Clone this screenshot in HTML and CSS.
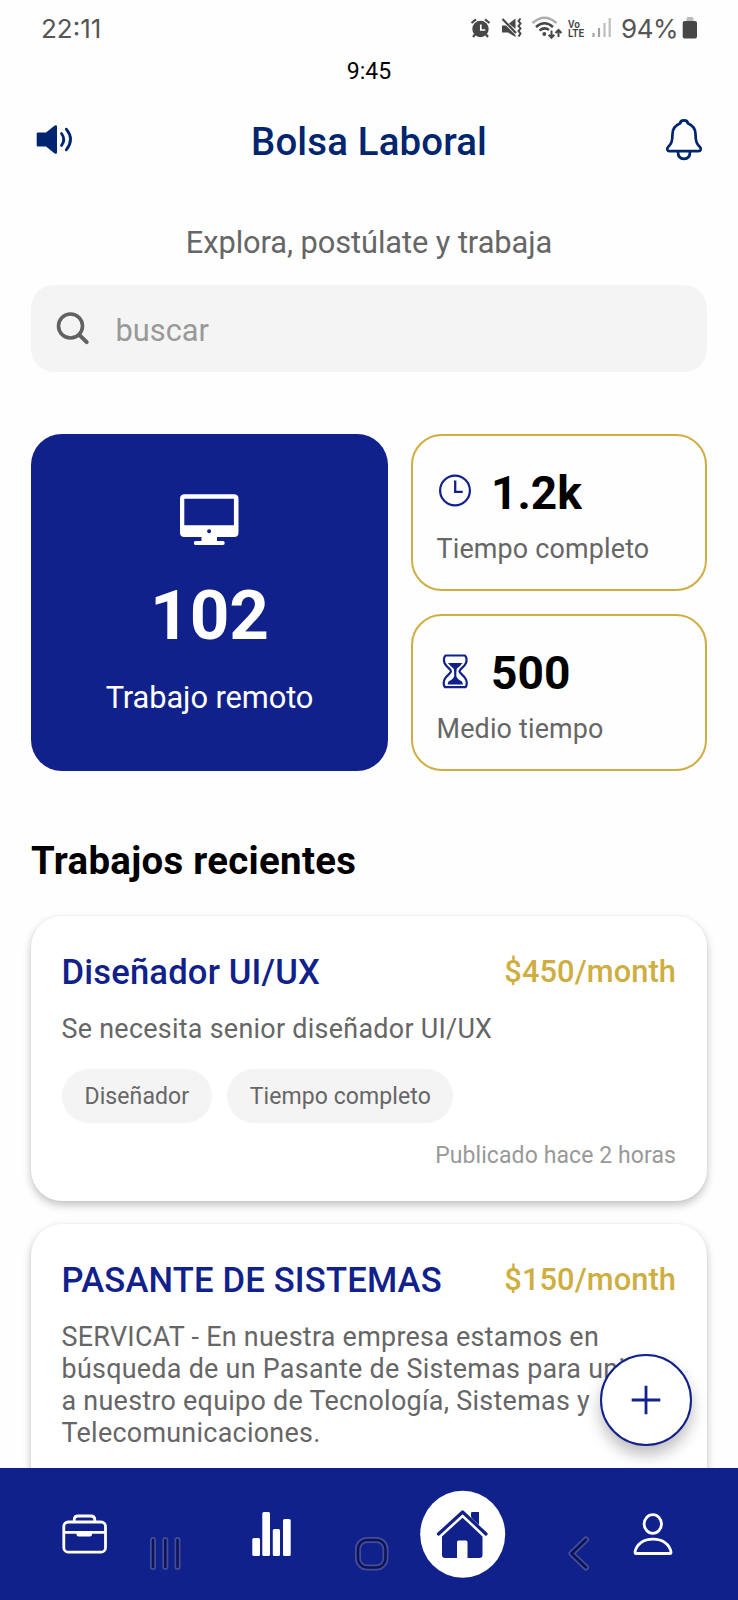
FILE: index.html
```html
<!DOCTYPE html>
<html lang="es">
<head>
<meta charset="utf-8">
<title>Bolsa Laboral</title>
<link rel="stylesheet" href="styles.css">
</head>
<body>
<div class="screen">
  <div class="status">
    <span class="status-time">22:11</span>
    <div class="status-right">
      <svg class="status-icons" viewBox="468 14 94 30" width="94" height="30">
        <g fill="#474747" stroke="#474747">
          <circle cx="480.500" cy="30" r="8.200" stroke="none"/>
          <path d="M471.500 24 476 20.300M489.500 24 485 20.300M475 35.500 473 38M486 35.500 488 38" fill="none" stroke-width="2.200"/>
          <path d="M480.800 25.500v5.500h4.500" fill="none" stroke="#fff" stroke-width="1.700"/>
          <path d="M502 26.500h4l9.500 9.500v2L508 33.500h-6z" stroke="none"/>
          <path d="M509 24.500 515.500 19.500v10.500z" stroke="none"/>
          <path d="M502.500 20 516 34" fill="none" stroke-width="2.200"/>
          <path d="M520.500 19.500l-2 2.500 2 2.500-2 2.500 2 2.500-2 2.500 2 2.500-2 3" fill="none" stroke-width="2"/>
          <path d="M532.500 24Q544.500 13.500 556.500 24" fill="none" stroke="#adadad" stroke-width="2.500"/>
          <path d="M536 28Q544.500 20.500 553 28M539.500 31.500Q544.500 27.500 549 31" fill="none" stroke-width="2.500"/>
          <circle cx="544.300" cy="35" r="1.900" stroke="none"/>
          <path d="M551.500 31.500v7M548.700 35.800l2.800 3 2.800-3M558.500 38v-7M555.500 34l3-3 3 3" fill="none" stroke-width="2"/>
        </g>
      </svg>
      <span class="volte"><span>Vo</span><span>LTE</span></span>
      <svg class="signal" viewBox="591 14 22 30" width="22" height="30">
        <path d="M593.500 34v4M599 29v9" stroke="#a5a5a5" stroke-width="2.200"/>
        <path d="M604.500 24v14M609.700 19v19" stroke="#bdbdbd" stroke-width="2.200"/>
      </svg>
      <span class="battery-level">94%</span>
      <svg viewBox="682 14 16 30" width="16" height="30">
        <path d="M686.500 23v-3.500q0-1.500 1.500-1.500h4q1.500 0 1.500 1.500V23z" fill="#bbb"/>
        <rect x="682.700" y="22" width="14.300" height="17.500" rx="2" fill="#474747"/>
      </svg>
    </div>
  </div>

  <main class="content">
    <div class="clock">9:45</div>
    <header class="header">
      <svg class="header-icon" viewBox="34 120 42 40" width="42" height="40">
        <path d="M38 132.500h8l8.700-7q2.300-1 2.300 1v26q0 2-2.300 1l-8.700-7h-8q-1.300 0-1.300-1.300v-11.400q0-1.300 1.300-1.300z" fill="#00256f"/>
        <path d="M61.500 133.500q4.500 6 0 12M66.300 129.200q8.500 10.300 0 20.600" fill="none" stroke="#00256f" stroke-width="2.800" stroke-linecap="round"/>
      </svg>
      <h1 class="title">Bolsa Laboral</h1>
      <svg class="header-icon" viewBox="664 117 40 46" width="40" height="46">
        <path d="M680.300 123.300C680.300 119.500 687.700 119.500 687.700 123.300C693 125.500 695.500 129.500 695.500 134C695.500 143 697.500 144.500 700 147.200C701.500 149 700.700 151.200 698.500 151.200H669.500C667.300 151.200 666.500 149 668 147.200C670.500 144.500 672.500 143 672.500 134C672.500 129.500 675 125.500 680.300 123.300Z" fill="none" stroke="#00256f" stroke-width="2.700" stroke-linejoin="round"/>
        <path d="M678 152q0 6.800 6 6.800t6-6.800" fill="none" stroke="#00256f" stroke-width="2.700"/>
      </svg>
    </header>
    <p class="tagline">Explora, postúlate y trabaja</p>
    <div class="search">
      <svg class="search-icon" viewBox="54 310 36 36" width="36" height="36">
        <circle cx="70.500" cy="326" r="12" fill="none" stroke="#616161" stroke-width="3.600"/>
        <path d="M79.300 334.800 86.700 342.200" stroke="#616161" stroke-width="4" stroke-linecap="round"/>
      </svg>
      <span class="search-text">buscar</span>
    </div>

    <section class="stats">
      <div class="stat-main">
        <svg viewBox="179 493 61 53" width="61" height="53">
          <path fill="#fff" fill-rule="evenodd" d="M184.500 494.300h49.500q4.500 0 4.500 4.500v33.700q0 4.500-4.500 4.500H217v4h6q1.700 0 1.700 2t-1.700 2h-27.500q-1.700 0-1.700-2t1.700-2h6v-4h-17q-4.500 0-4.500-4.500v-33.700q0-4.500 4.500-4.500zM184.300 498.800v26.400h49.600v-26.400zM209.100 529.200a2 2 0 1 0 .010 0z"/>
        </svg>
        <strong class="stat-main-value">102</strong>
        <span class="stat-main-label">Trabajo remoto</span>
      </div>
      <div class="stat">
        <div class="stat-row">
          <svg viewBox="439 473 34 36" width="34" height="36">
            <circle cx="456" cy="490.500" r="14.900" fill="none" stroke="#11218b" stroke-width="2.200"/>
            <path d="M456.200 480.500v11.300h7.500" fill="none" stroke="#11218b" stroke-width="2.300"/>
          </svg>
          <strong class="stat-value">1.2k</strong>
        </div>
        <span class="stat-label">Tiempo completo</span>
      </div>
      <div class="stat">
        <div class="stat-row">
          <svg viewBox="439 652 34 36" width="34" height="36">
            <path d="M446.500 654.500H466Q468.500 657 467 662C465 666.500 460.500 668 460.500 670.300C460.500 672.500 465 674 467 678.500Q468.800 683.500 466.500 686.200H446Q443.700 683.500 445.500 678.500C447.500 674 452 672.500 452 670.300C452 668 447.500 666.500 445.500 662Q444 657 446.500 654.500Z" fill="none" stroke="#11218b" stroke-width="2.200" stroke-linejoin="round"/>
            <path d="M449 662h14.500Q461 665.500 458 667.500 457.300 668 457.300 675 458 678 463 680.500L464 683.500H448.500L449.500 680.500Q454.500 678 455.200 675 455.200 668 454.500 667.500 451.500 665.500 449 662Z" fill="#11218b"/>
          </svg>
          <strong class="stat-value">500</strong>
        </div>
        <span class="stat-label">Medio tiempo</span>
      </div>
    </section>

    <h2 class="section-title">Trabajos recientes</h2>
    <article class="job">
      <div class="job-head"><h3 class="job-title">Diseñador UI/UX</h3><span class="job-pay">$450/month</span></div>
      <p class="job-text">Se necesita senior diseñador UI/UX</p>
      <div class="tags"><span class="tag">Diseñador</span><span class="tag">Tiempo completo</span></div>
      <div class="job-date">Publicado hace 2 horas</div>
    </article>
    <article class="job">
      <div class="job-head"><h3 class="job-title">PASANTE DE SISTEMAS</h3><span class="job-pay">$150/month</span></div>
      <p class="job-text">SERVICAT - En nuestra empresa estamos en<br>búsqueda de un Pasante de Sistemas para unir<br>a nuestro equipo de Tecnología, Sistemas y<br>Telecomunicaciones.</p>
    </article>
  </main>

  <button class="fab" aria-label="Agregar">
    <svg viewBox="0 0 30 30" width="30" height="30"><path d="M15 .700v28.600M.700 15h28.600" stroke="#11218b" stroke-width="2.800"/></svg>
  </button>

  <nav class="tabs">
    <svg viewBox="62.500 1512 46 44" width="46" height="44">
      <g fill="none" stroke="#fff" stroke-width="2.800">
        <rect x="64.300" y="1522" width="41.700" height="30.200" rx="4.500"/>
        <path d="M74.700 1521.500v-1.500q0-4 4-4h12.600q4 0 4 4v1.500M64.300 1532.300h41.700"/>
      </g>
      <path d="M77 1532.500h15.500v2q0 2-2 2h-11.500q-2 0-2-2z" fill="#fff"/>
    </svg>
    <svg class="tab-chart" viewBox="252 1511 40 46" width="40" height="46">
      <g fill="#fff"><rect x="252.300" y="1538" width="7.700" height="18" rx="1.500"/><rect x="262.300" y="1512" width="7.700" height="44" rx="1.500"/><rect x="272.800" y="1529" width="7.200" height="27" rx="1.500"/><rect x="283" y="1519" width="7.700" height="37" rx="1.500"/></g>
    </svg>
    <svg viewBox="420 1490 86 88" width="86" height="88">
      <ellipse cx="462.700" cy="1534.300" rx="42.500" ry="43.500" fill="#fff"/>
      <path d="M471 1517v-3.500q0-1.500 1.500-1.500h5q1.500 0 1.500 1.500V1526z" fill="#11218b"/>
      <path d="M438.500 1534.500 462.600 1512.200 486 1534.500" fill="none" stroke="#fff" stroke-width="6"/>
      <path d="M471.500 1518v-5h7v12" fill="#11218b"/>
      <path d="M442 1536.500 462.500 1517.500 482.500 1536.500V1555q0 3-3 3H467.500V1542q0-1.500-1.500-1.500h-7.500q-1.500 0-1.500 1.500V1558h-12q-3 0-3-3z" fill="#11218b"/>
      <path d="M439 1534.500 462.600 1514 486 1534.500" fill="none" stroke="#fff" stroke-width="5.600"/>
      <path d="M438.500 1534 462.600 1512 486 1534" fill="none" stroke="#11218b" stroke-width="3.200" stroke-linecap="round" stroke-linejoin="round"/>
      <path d="M471.500 1517v-5h7.500v13z" fill="#11218b"/>
    </svg>
    <svg viewBox="634.500 1511 42 44" width="42" height="44">
      <g fill="none" stroke="#fff" stroke-width="2.800" stroke-linejoin="round"><ellipse cx="653.300" cy="1523" rx="8.700" ry="9.300"/><path d="M636.500 1552.500H670.500Q671.500 1552.500 671.500 1551C670 1543 663 1538.200 653.500 1538.200S637 1543 635.500 1551Q635.500 1552.500 636.500 1552.500Z"/></g>
    </svg>
  </nav>

  <svg class="system-keys" viewBox="145 1532 450 44" width="450" height="44">
    <g fill="none" stroke="#444e94" stroke-width="6" stroke-linecap="round" stroke-linejoin="round">
      <path d="M153 1540v27M165.300 1540v27M177.500 1540v27M586 1539.500 571.500 1553.500 586 1567.500"/><rect x="358" y="1540" width="27.500" height="27.500" rx="9"/>
    </g>
    <g fill="none" stroke="#0a1159" stroke-width="2.500" stroke-linecap="round" stroke-linejoin="round">
      <path d="M153 1540v27M165.300 1540v27M177.500 1540v27M586 1539.500 571.500 1553.500 586 1567.500"/><rect x="358" y="1540" width="27.500" height="27.500" rx="9"/>
    </g>
  </svg>
</div>
</body>
</html>
```
FILE: styles.css
```css
* { box-sizing: border-box; margin: 0; padding: 0; }
body { background: #fefefe; font-family: Roboto, "Liberation Sans", sans-serif; }
svg { display: block; flex: none; overflow: visible; }
.screen { position: relative; display: flex; flex-direction: column; width: 738px; height: 1600px; overflow: hidden; background: #fefefe; }
.status { flex: none; display: flex; justify-content: space-between; align-items: center; height: 56px; padding: 0 40px 0 41px; font-family: Inter, Roboto, sans-serif; font-size: 26px; color: #555; font-weight: 400; }
.status-right { display: flex; align-items: center; }
.status-icons { margin-right: 6px; }
.volte { display: flex; flex-direction: column; width: 23px; font: 600 10px/9px Roboto, sans-serif; padding-top: 2px; color: #474747; }
.signal { margin-right: 8px; }
.battery-level { width: 61px; white-space: nowrap; letter-spacing: -.400px; }
.content { flex: 1; min-height: 0; overflow: hidden; padding: 0 31px; }
.clock { margin-top: -.500px; text-align: center; font-size: 23px; line-height: 32.500px; color: #000; }
.header { display: flex; align-items: center; justify-content: space-between; height: 107px; margin: 0 3px; }
.header-icon { margin-top: -4px; }
.title { margin-left: -2px; font-size: 38.400px; font-weight: 500; letter-spacing: .150px; color: #00256f; }
.tagline { margin: 29px 0 24px; text-align: center; font-size: 30.800px; line-height: 37px; letter-spacing: -.080px; color: #666; }
.search { display: flex; align-items: center; height: 87px; padding-left: 23px; border-radius: 23px; background: #f4f4f4; }
.search-icon { margin-top: -2px; }
.search-text { margin-left: 25.500px; padding-top: 4px; font-size: 30.800px; color: #999; }
.stats { display: grid; grid-template-columns: 357px 296px; grid-template-rows: 157px 157px; gap: 23px; margin-top: 62px; }
.stat-main { grid-row: span 2; display: flex; flex-direction: column; align-items: center; padding-top: 59px; border-radius: 31px; background: #11218b; color: #fff; }
.stat-main-value { margin-top: 29px; font-size: 69.200px; line-height: 82px; font-weight: 700; }
.stat-main-label { margin-top: 23px; font-size: 30.800px; line-height: 36px; letter-spacing: -.080px; }
.stat { padding: 30px 23.500px 0; border: 2px solid #cfae41; border-radius: 31px; }
.stat-row { display: flex; align-items: center; height: 54px; padding-left: 1.500px; }
.stat-row svg { margin-top: -4px; }
.stat-value { margin-left: 19px; font-size: 46.100px; line-height: 54px; font-weight: 700; color: #000; }
.stat-label { display: block; font-size: 26.900px; line-height: 32px; margin-top: 13px; letter-spacing: .170px; color: #666; }
.section-title { margin: 67px 0 32px; font-size: 38.400px; line-height: 46px; font-weight: 700; letter-spacing: .300px; color: #000; }
.job { height: 284.500px; margin-bottom: 23px; padding: 35px 31px 0; border-radius: 31px; background: #fff; box-shadow: 0 4px 8px rgba(0,0,0,.24), 0 0 2px rgba(0,0,0,.05); }
.job-head { display: flex; align-items: center; justify-content: space-between; height: 42px; }
.job-title { margin-left: -.500px; font-size: 34.600px; font-weight: 500; letter-spacing: .180px; color: #11218b; }
.job-pay { margin-top: -1px; font-size: 30.800px; font-weight: 500; letter-spacing: .080px; color: #cfae41; }
.job-text { margin: 20px 0 0 -.500px; font-size: 26.900px; line-height: 32px; letter-spacing: .280px; color: #666; white-space: nowrap; }
.tags { display: flex; gap: 15.500px; margin-top: 24px; }
.tag { height: 54px; padding: 1px 22.500px 0; border-radius: 27px; background: #f4f4f4; font-size: 23px; line-height: 54px; letter-spacing: .090px; color: #666; }
.job-date { margin-top: 19px; text-align: right; font-size: 23px; line-height: 28px; letter-spacing: .090px; color: #999; }
.fab { position: absolute; left: 600px; top: 1354px; width: 92px; height: 92px; display: grid; place-items: center; border: 2px solid #11218b; border-radius: 50%; background: #fff; box-shadow: 0 9px 15px rgba(0,0,0,.25); }
.tabs { flex: none; display: flex; align-items: center; gap: 128px; height: 132px; padding-left: 62px; background: #11218b; }
.tab-chart { margin-left: 16px; }
.system-keys { position: absolute; left: 145px; top: 1532px; pointer-events: none; }
```
